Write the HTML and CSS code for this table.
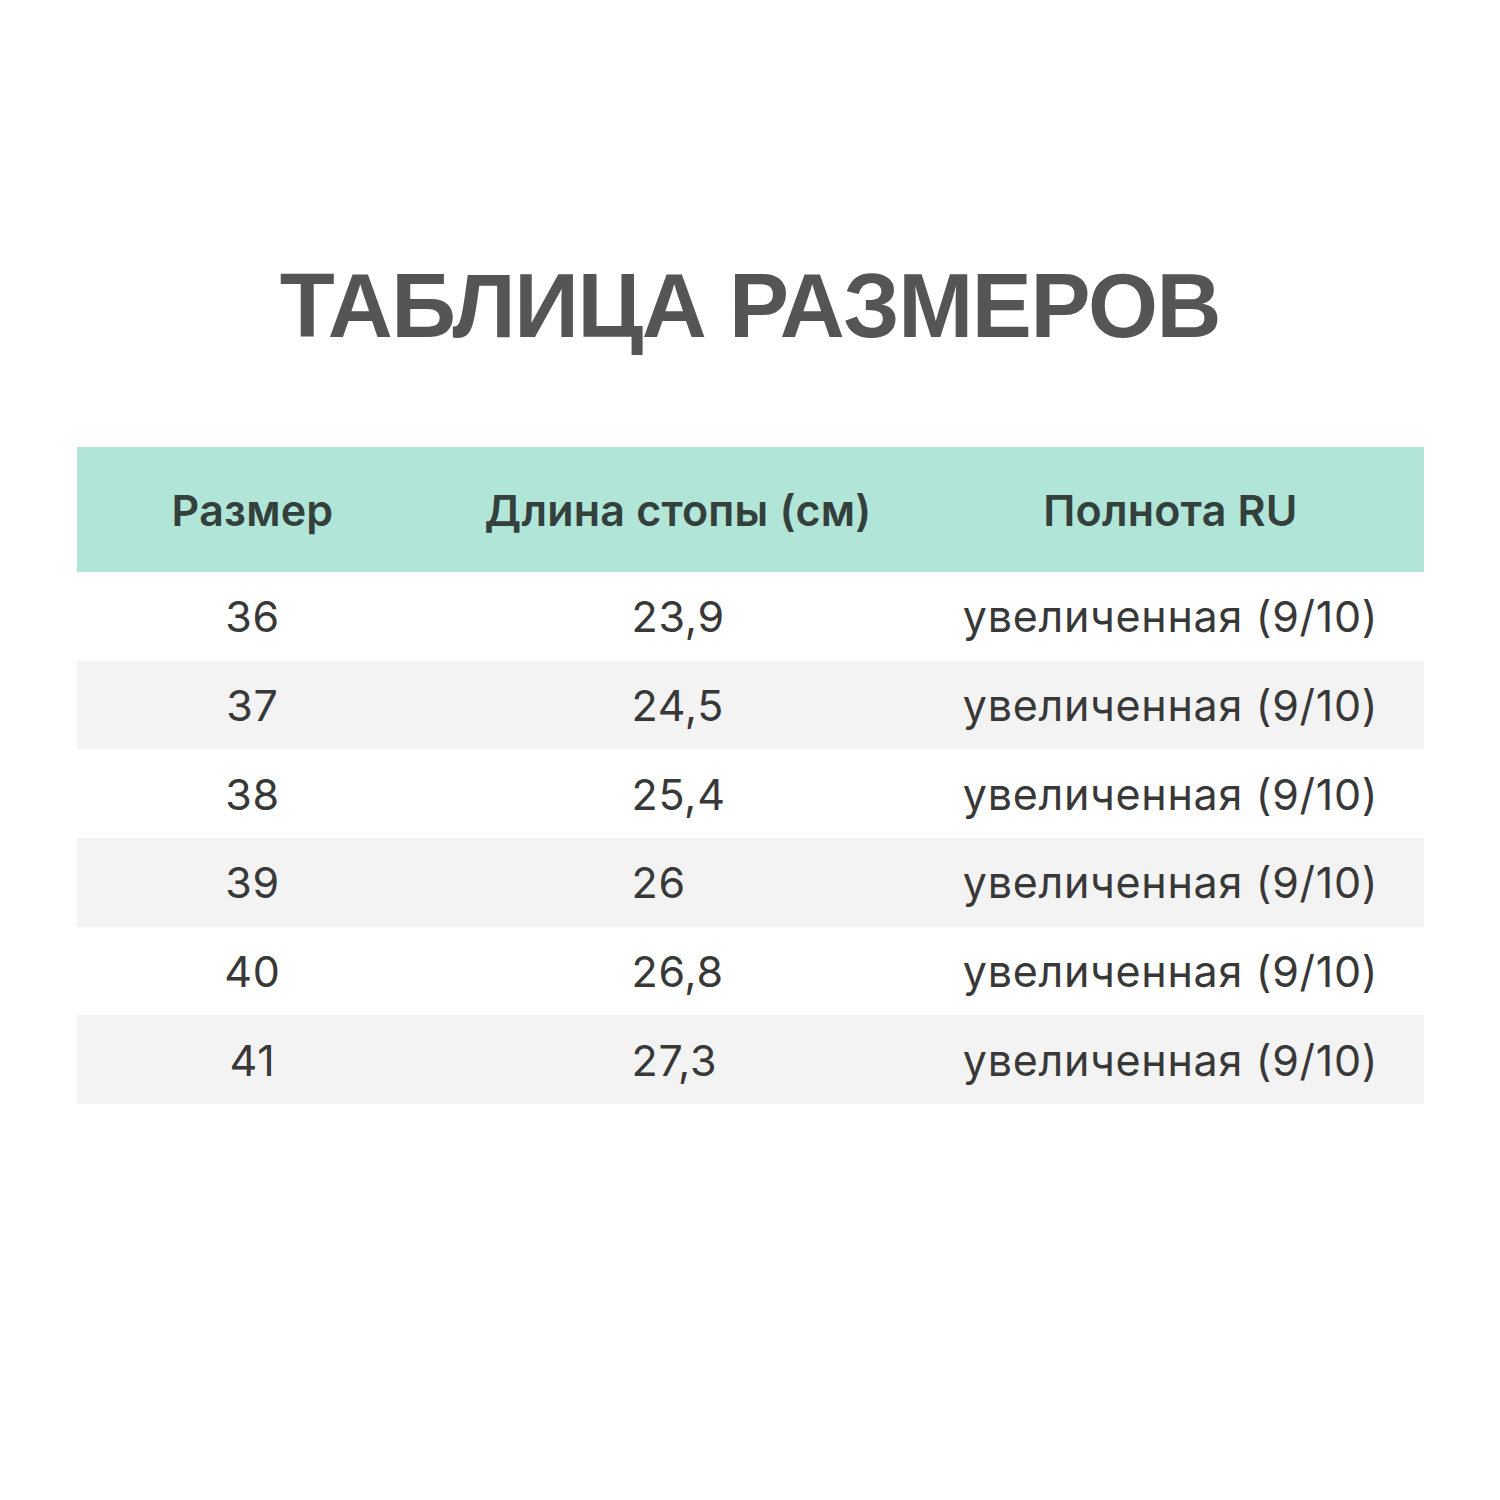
FILE: index.html
```html
<!DOCTYPE html>
<html lang="ru">
<head>
<meta charset="utf-8">
<title>Таблица размеров</title>
<link rel="stylesheet" href="styles.css">
</head>
<body>
<main class="page">
  <h1 class="title">ТАБЛИЦА РАЗМЕРОВ</h1>
  <div class="table">
    <div class="row head">
      <div class="cell c1">Размер</div>
      <div class="cell c2h">Длина стопы (см)</div>
      <div class="cell c3">Полнота RU</div>
    </div>
    <div class="row">
      <div class="cell c1">36</div>
      <div class="cell c2">23,9</div>
      <div class="cell c3">увеличенная (9/10)</div>
    </div>
    <div class="row alt">
      <div class="cell c1">37</div>
      <div class="cell c2">24,5</div>
      <div class="cell c3">увеличенная (9/10)</div>
    </div>
    <div class="row">
      <div class="cell c1">38</div>
      <div class="cell c2">25,4</div>
      <div class="cell c3">увеличенная (9/10)</div>
    </div>
    <div class="row alt">
      <div class="cell c1">39</div>
      <div class="cell c2">26</div>
      <div class="cell c3">увеличенная (9/10)</div>
    </div>
    <div class="row">
      <div class="cell c1">40</div>
      <div class="cell c2">26,8</div>
      <div class="cell c3">увеличенная (9/10)</div>
    </div>
    <div class="row alt">
      <div class="cell c1">41</div>
      <div class="cell c2">27,3</div>
      <div class="cell c3">увеличенная (9/10)</div>
    </div>
  </div>
</main>
</body>
</html>
```

FILE: styles.css
```css
html, body {
  margin: 0;
  padding: 0;
  background: #ffffff;
}

.page {
  width: 1500px;
  height: 1500px;
  display: flex;
  flex-direction: column;
  align-items: center;
}

.title {
  margin: 0;
  padding-top: 261px;
  font-family: "Liberation Sans", Arial, sans-serif;
  font-weight: 700;
  font-size: 90px;
  line-height: 90px;
  letter-spacing: -1.4px;
  color: #555555;
  text-align: center;
}

.table {
  margin-top: 96px;
  width: 1347px;
  display: flex;
  flex-direction: column;
  font-family: Inter, "Noto Sans", sans-serif;
}

.row {
  display: grid;
  grid-template-columns: 352px 499px 1fr;
  height: 88.67px;
  align-items: center;
  font-size: 43px;
  letter-spacing: 0.7px;
  color: #383838;
}

.row.alt {
  background: #f3f3f3;
}

.row.head {
  height: 125px;
  background: #b1e5d8;
  font-weight: 600;
  font-size: 43px;
  letter-spacing: 0.2px;
  color: #33403c;
}

.cell {
  white-space: nowrap;
}

.c1, .c3, .c2h {
  text-align: center;
}

.c3 {
  padding-right: 10px;
}

.c2 {
  text-align: left;
  padding-left: 203px;
}
```
